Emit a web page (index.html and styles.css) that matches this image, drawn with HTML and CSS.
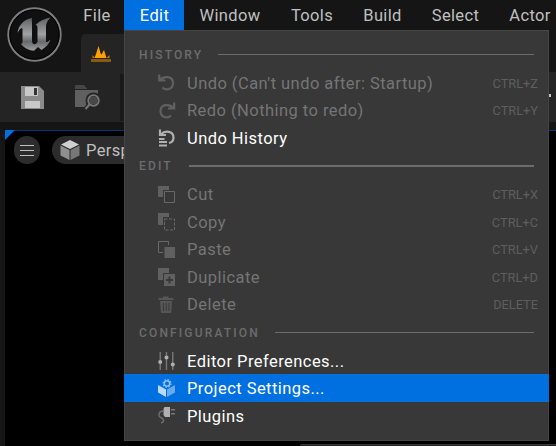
FILE: index.html
```html
<!DOCTYPE html>
<html lang="en">
<head>
<meta charset="utf-8">
<title>Editor</title>
<link rel="stylesheet" href="styles.css">
</head>
<body>
<div class="app">
  <header class="top">
    <svg class="logo" viewBox="0 0 56 56" width="56" height="56">
      <defs>
        <linearGradient id="metal" x1="0" y1="0" x2="0" y2="1">
          <stop offset="0" stop-color="#5e6062"/><stop offset=".5" stop-color="#a0a2a4"/><stop offset=".72" stop-color="#67696b"/><stop offset="1" stop-color="#9b9d9f"/>
        </linearGradient>
      </defs>
      <circle cx="28.500" cy="28.500" r="26.200" fill="#101010" stroke="#7c7e80" stroke-width="2"/>
      <circle cx="28.500" cy="28.500" r="24.700" fill="none" stroke="#000" stroke-width="1"/>
      <path fill="url(#metal)" d="M26 12C18 13 12 20 11.500 27C13.500 23.500 15 21.500 16.500 22.500V35.500C16.500 37.500 16 38 14.500 37.500C18 42 23 44.500 28 44.800L32 41L35.500 44C40 41 43.500 37.500 44.500 33.500C42.500 35.500 40 37 40 35.500V19.500C40.500 16.500 42 14 44.500 11.500C39 12.500 34 14.500 29.500 19C31 19 31.500 20 31.500 22V36C30 38 29 38.500 27.500 38C26.300 37.500 26 36 26 34V17C26 15 25.500 13.500 26 12Z"/>
    </svg>
    <nav class="menubar">
      <span class="mi file">File</span><span class="mi edit">Edit</span><span class="mi window">Window</span><span class="mi tools">Tools</span><span class="mi build">Build</span><span class="mi select">Select</span><span class="mi actor">Actor</span>
    </nav>
    <div class="tab">
      <svg viewBox="0 0 20 17" width="20" height="17"><path fill="#ffa009" d="M3.500 12L5 8L7.500 0L9.800 8L10.500 8.500L13 4L15.500 12Z"/><path fill="#c47b0c" d="M1.500 12V9L4 12ZM18.500 12V9L15.500 12Z"/><path fill="#8b5910" d="M0 13H20V16H0Z"/></svg>
    </div>
  </header>
  <div class="toolbar">
    <svg class="save" viewBox="0 0 23 23" width="23" height="23"><path fill="#8b8b8b" d="M0 0H18L23 5V23H0Z"/><path fill="#c8c8c8" d="M4 1H17V10H4ZM4 15H19V22H4Z"/><path fill="#333" d="M13 2H16V9H13Z"/></svg>
    <svg class="browse" viewBox="0 0 26 25" width="26" height="25"><path fill="#464646" d="M0 4V1Q0 0 1 0H9L12 3.500V4Z"/><path fill="#606060" d="M0 5H23V22H0Z"/><g fill="none"><path stroke="#242424" stroke-width="5" d="M14.500 20L10 25"/><circle cx="18.500" cy="15.500" r="6" fill="#484848" stroke="#242424" stroke-width="4"/><circle cx="18.500" cy="15.500" r="5.300" stroke="#777" stroke-width="1.800"/><path stroke="#777" stroke-width="2" d="M14.500 19.500L10.500 24"/></g></svg>
    <span class="divider"></span><span class="arrow"></span>
  </div>
  <main class="viewport">
    <span class="corner"></span>
    <span class="burger"><i></i><i></i><i></i></span>
    <span class="persp"><svg viewBox="0 0 20 20" width="20" height="20"><path fill="#d0d0d0" d="M10 0L19 4.500L10 9L1 4.500Z"/><path fill="#8f8f8f" d="M.5 5.500L9.500 10V20L.5 15.500Z"/><path fill="#777" d="M19.500 5.500L10.500 10V20L19.500 15.500Z"/></svg>Perspective</span>
    <span class="drawer"></span>
  </main>
</div>

<div class="menu">
  <div class="head history"><span>HISTORY</span><b></b></div>
  <div class="row dim"><svg viewBox="0 0 18 18"><path class="ln" d="M1.300 .5V6.500H7.500M2 6C6 1.500 15 2 15 9C15 15.500 8 17 4.500 13.500"/></svg><span>Undo (Can't undo after: Startup)</span><kbd>CTRL+Z</kbd></div>
  <div class="row dim"><svg viewBox="0 0 18 18"><path class="ln" d="M16.200 .5V6.500H10M15.500 6C11.500 1.500 2.500 2 2.500 9C2.500 15.500 9.500 17 13 13.500"/></svg><span>Redo (Nothing to redo)</span><kbd>CTRL+Y</kbd></div>
  <div class="row"><svg viewBox="0 0 18 18"><path class="ln" d="M2 .5V6H8M3 5.500C7 1 15.500 2 15.500 8.500C15.500 11.500 14 13.500 11 14M1 10H6.500M1 13H9M1 16.500H9"/></svg><span>Undo History</span></div>
  <div class="head mid thick"><span>EDIT</span><b></b></div>
  <div class="row dim"><svg viewBox="0 0 18 18"><path d="M0 0H11V4H5V11H0Z"/><path class="thin" d="M6.500 5.500H16.500V16.500H6.500Z"/></svg><span>Cut</span><kbd>CTRL+X</kbd></div>
  <div class="row dim"><svg viewBox="0 0 18 18"><path d="M0 0H11V4H5V12H0Z"/><path class="thin dash" d="M6.500 6H16.500V17H6.500Z"/></svg><span>Copy</span><kbd>CTRL+C</kbd></div>
  <div class="row dim"><svg viewBox="0 0 18 18"><path d="M6.500 6H17V17H6.500Z"/><path class="thin" d="M5 11.500H.5V.5H10.500V4"/></svg><span>Paste</span><kbd>CTRL+V</kbd></div>
  <div class="row dim"><svg viewBox="0 0 18 18"><path d="M0 0H11V5H5V12H0Z"/><path fill-rule="evenodd" d="M6 6H17V18H6ZM10.500 8.500V11H8V13H10.500V15.500H12.500V13H15V11H12.500V8.500Z"/></svg><span>Duplicate</span><kbd>CTRL+D</kbd></div>
  <div class="row dim"><svg viewBox="0 0 18 18"><g opacity=".75"><path d="M.5 2H5V.5H10.500V2H15.500V4H.5Z"/><path fill-rule="evenodd" d="M2 5H14L13.200 17H3ZM5 7V15H6V7ZM7.700 7V15H8.700V7ZM10.500 7V15H11.500V7Z"/></g></svg><span>Delete</span><kbd>DELETE</kbd></div>
  <div class="head mid conf"><span>CONFIGURATION</span><b></b></div>
  <div class="row low"><svg viewBox="0 0 18 18"><path opacity=".5" d="M1.500 0H3V18H1.500ZM7.700 0H9.200V18H7.700ZM14 0H15.500V18H14Z"/><circle cx="2.200" cy="10" r="2"/><circle cx="8.500" cy="5.500" r="2"/><circle cx="14.800" cy="12.500" r="2"/></svg><span>Editor Preferences...</span></div>
  <div class="row active"><svg viewBox="0 0 18 18"><path fill="#b8daff" d="M0 6L8 10.500V18L0 13.500Z"/><path fill="#66aaf3" d="M17 6L9 10.500V18L17 13.500Z"/><circle cx="9" cy="4.500" r="4.600" fill="#0070e0"/><circle cx="9" cy="4.500" r="2.700" fill="none" stroke="#8fc2f8" stroke-width="1.500"/><circle cx="9" cy="4.500" r="3.900" fill="none" stroke="#8fc2f8" stroke-width="1.200" stroke-dasharray="1.500 1.563"/></svg><span>Project Settings...</span></div>
  <div class="row low"><svg viewBox="0 0 18 18"><path fill="#b0b0b0" d="M6.500 0H12V10H7L5.500 8V2Z"/><path fill="#777" d="M13 2H17V3.500H13ZM13 6H17V7.500H13Z"/><path fill="none" stroke="#707070" stroke-width="1.400" d="M5 4C1 4 0 8 2 10C4 11.500 6 12 5.500 14C5.200 15 4.500 15.500 3 15.700"/></svg><span>Plugins</span></div>
</div>
</body>
</html>
```
FILE: styles.css
```css
* { box-sizing: border-box; }
body { margin: 0; width: 556px; height: 446px; overflow: hidden; background: #151515; font-family: Roboto, "Liberation Sans", sans-serif; font-size: 16.5px; letter-spacing: .35px; color: #c0c0c0; white-space: nowrap; }
svg { display: block; flex: none; }
.app { display: flex; flex-direction: column; height: 446px; }
.top { height: 72px; display: grid; grid-template-columns: 69px 1fr; grid-template-rows: 30px 42px; }
.logo { grid-row: 1 / 3; margin: 6px 0 0 6px; }
.menubar { display: flex; min-width: 0; }
.mi { flex: none; height: 30px; line-height: 31px; text-align: center; }
.file { width: 56px; margin-right: -1px; }
.edit { width: 60px; background: #0070e0; color: #fff; padding-left: 1px; }
.window { width: 92px; }
.tools { width: 72px; }
.build { width: 69px; }
.select { width: 77px; }
.actor { width: 72px; }
.tab { margin: 4px 0 0 12px; width: 80px; height: 38px; border-radius: 5px 5px 0 0; background: #242424; padding: 12px 0 0 10px; }
.toolbar { height: 50px; flex: none; background: #242424; display: flex; padding-left: 21px; }
.save { margin-top: 14px; }
.browse { margin: 13px 0 0 31px; }
.divider { width: 4px; height: 47px; margin: 2px 0 0 19px; background: #191919; }
.arrow { width: 2px; height: 3px; margin: 22px 0 0 425px; background: #c0c0c0; }
.viewport { position: relative; margin: 8px 0 0 5px; height: 316px; background: #000; border-top: 1px solid #003674; display: flex; padding: 5px 0 0 9px; }
.corner { position: absolute; left: 0; top: -1px; border-top: 10px solid #0070e0; border-right: 10px solid transparent; }
.burger { width: 26px; height: 28px; border-radius: 13px; background: #2c2c2c; display: flex; flex-direction: column; align-items: center; justify-content: center; gap: 4px; }
.burger i { width: 14px; height: 1px; background: #c0c0c0; }
.persp { margin-left: 12px; width: 132px; height: 28px; border-radius: 14px; background: #2c2c2c; display: flex; align-items: center; padding-left: 8px; gap: 6px; }
.drawer { position: absolute; left: 295px; top: 313px; width: 260px; height: 8px; border-radius: 2px 0 0 0; background: #242424; border-top: 1px solid #393939; }
.menu { position: absolute; left: 124px; top: 30px; width: 425px; height: 411px; background: #383838; border: 1px solid #454545; }
.head { display: flex; align-items: center; padding: 0 14px; font-size: 12px; font-weight: 500; letter-spacing: 2.150px; color: #6c6c6c; height: 29px; }
.head b { flex: 1; height: 1px; background: #6c6c6c; margin-left: 15px; }
.thick b { height: 2px; margin-left: 16px; }
.history { height: 38px; padding-top: 9px; }
.conf { height: 28.500px; padding-top: 1px; }
.row { height: 27.500px; margin: 0 -1px; display: flex; align-items: center; padding: 1px 11px 0 34px; color: #fff; letter-spacing: .45px; }
.low { padding-top: 2px; }
.row svg { width: 18px; height: 18px; margin-right: 11px; fill: #b0b0b0; stroke: none; }
.row .ln { fill: none; stroke: #b0b0b0; stroke-width: 2.200; }
.row .thin { fill: none; stroke: #686868; stroke-width: 1; }
.row .dash { stroke-dasharray: 3 1.500; }
.dim { color: #757575; }
.dim svg { fill: #606060; }
.row.dim .ln { stroke: #606060; }
.row kbd { margin-left: auto; font: 12.800px Roboto, "Liberation Sans", sans-serif; letter-spacing: 0; color: #5e5e5e; }
.active { background: #0070e0; }
```
